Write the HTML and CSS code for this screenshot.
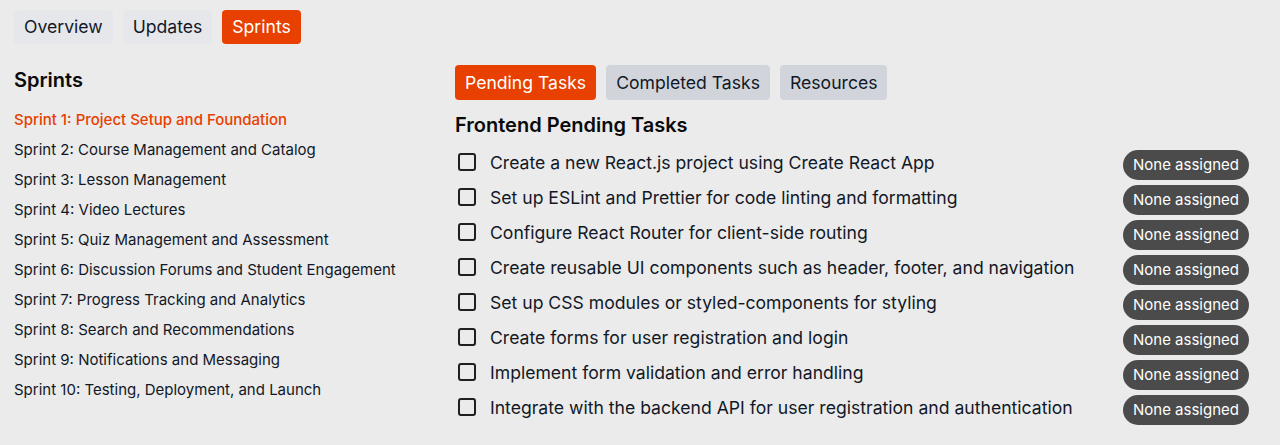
FILE: index.html
```html
<!DOCTYPE html>
<html>
<head>
<meta charset="utf-8">
<link rel="stylesheet" href="styles.css">
</head>
<body>
<div class="page">
  <nav class="tabs">
    <button class="tab">Overview</button>
    <button class="tab">Updates</button>
    <button class="tab active">Sprints</button>
  </nav>
  <div class="main">
    <aside class="sidebar">
      <h2 class="heading side-heading">Sprints</h2>
      <ul class="sprint-list">
        <li class="sprint current">Sprint 1: Project Setup and Foundation</li>
        <li class="sprint">Sprint 2: Course Management and Catalog</li>
        <li class="sprint">Sprint 3: Lesson Management</li>
        <li class="sprint">Sprint 4: Video Lectures</li>
        <li class="sprint">Sprint 5: Quiz Management and Assessment</li>
        <li class="sprint">Sprint 6: Discussion Forums and Student Engagement</li>
        <li class="sprint">Sprint 7: Progress Tracking and Analytics</li>
        <li class="sprint">Sprint 8: Search and Recommendations</li>
        <li class="sprint">Sprint 9: Notifications and Messaging</li>
        <li class="sprint">Sprint 10: Testing, Deployment, and Launch</li>
      </ul>
    </aside>
    <section class="content">
      <nav class="subtabs">
        <button class="subtab active">Pending Tasks</button>
        <button class="subtab">Completed Tasks</button>
        <button class="subtab">Resources</button>
      </nav>
      <h2 class="heading task-heading">Frontend Pending Tasks</h2>
      <ul class="tasks">
        <li class="task"><span class="check"></span><span class="task-text">Create a new React.js project using Create React App</span><span class="badge">None assigned</span></li>
        <li class="task"><span class="check"></span><span class="task-text">Set up ESLint and Prettier for code linting and formatting</span><span class="badge">None assigned</span></li>
        <li class="task"><span class="check"></span><span class="task-text">Configure React Router for client-side routing</span><span class="badge">None assigned</span></li>
        <li class="task"><span class="check"></span><span class="task-text">Create reusable UI components such as header, footer, and navigation</span><span class="badge">None assigned</span></li>
        <li class="task"><span class="check"></span><span class="task-text">Set up CSS modules or styled-components for styling</span><span class="badge">None assigned</span></li>
        <li class="task"><span class="check"></span><span class="task-text">Create forms for user registration and login</span><span class="badge">None assigned</span></li>
        <li class="task"><span class="check"></span><span class="task-text">Implement form validation and error handling</span><span class="badge">None assigned</span></li>
        <li class="task"><span class="check"></span><span class="task-text">Integrate with the backend API for user registration and authentication</span><span class="badge">None assigned</span></li>
      </ul>
    </section>
  </div>
</div>
</body>
</html>
```

FILE: styles.css
```css
* { box-sizing: border-box; }
html, body { margin: 0; padding: 0; background: #ebebeb; }
body { font-family: Inter, "Noto Sans", sans-serif; color: #111827; }
.page { padding: 10px 31px 0 14px; }
.tabs { display: flex; gap: 10px; }
.tab, .subtab {
  font-family: inherit; font-size: 17.6px; line-height: 24px;
  padding: 5px 10px; border: 0; border-radius: 4px;
  background: #e5e7eb; color: #111827; cursor: pointer;
}
.tab { height: 34px; }
.subtab { background: #d1d5db; height: 35px; }
.tab.active, .subtab.active { background: #e84000; color: #fff; }
.main { display: flex; margin-top: 21px; }
.sidebar { width: 441px; flex: none; }
.heading { margin: 0; font-size: 20px; line-height: 28px; font-weight: 600; color: #0a0a0a; }
.side-heading { margin-top: 1px; }
.sprint-list { list-style: none; margin: 11px 0 0; padding: 0; }
.sprint { font-size: 15px; line-height: 30px; }
.sprint.current { color: #e84000; font-weight: 500; }
.content { flex: 1; }
.subtabs { display: flex; gap: 10px; }
.task-heading { margin-top: 11px; }
.tasks { list-style: none; margin: 11px 0 0; padding: 0; display: flex; flex-direction: column; gap: 5px; }
.task { display: flex; align-items: flex-start; height: 30px; }
.check {
  width: 18px; height: 18px; border: 2px solid #1f1f1f; border-radius: 3px;
  margin: 3px 14px 0 3px; flex: none;
}
.task-text { flex: 1; font-size: 17.6px; line-height: 25px; }
.badge {
  background: #4b4b4b; color: #fff; font-size: 15px; line-height: 30px;
  height: 30px; padding: 0 10px; border-radius: 15px;
}
```
